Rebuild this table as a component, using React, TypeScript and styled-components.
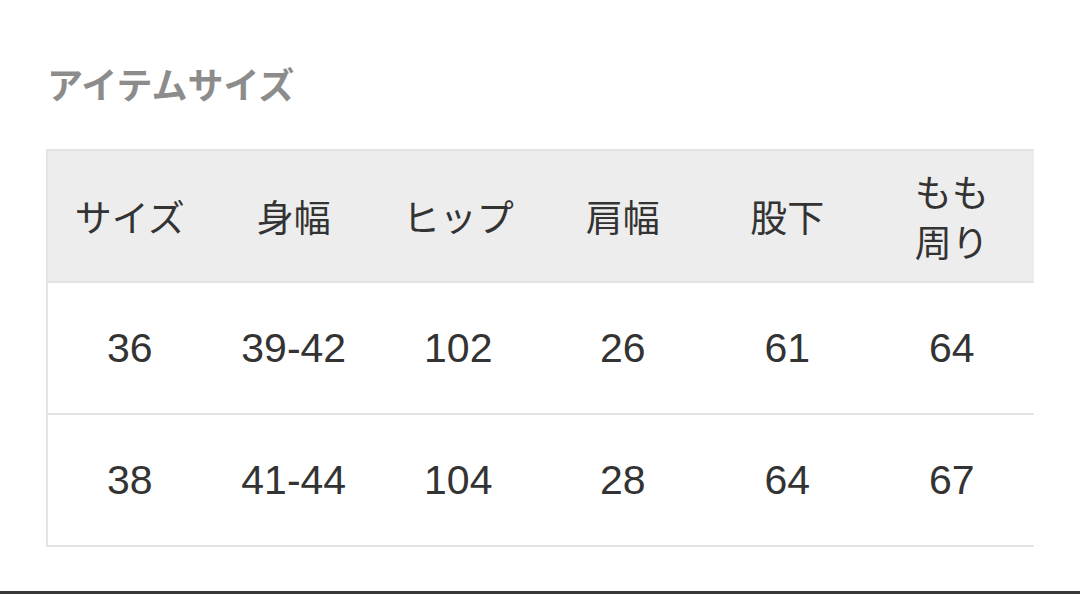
import React from "react";
import styled, { createGlobalStyle } from "styled-components";

const GlobalStyle = createGlobalStyle`
  html, body {
    margin: 0;
    padding: 0;
    background: #ffffff;
  }
  body {
    font-family: "Liberation Sans", "Noto Sans CJK JP", sans-serif;
  }
`;

const headers = ["サイズ", "身幅", "ヒップ", "肩幅", "股下", "もも\n周り"];

const rows = [
  ["36", "39-42", "102", "26", "61", "64"],
  ["38", "41-44", "104", "28", "64", "67"],
];

function App() {
  return (
    <Page>
      <GlobalStyle />
      <Content>
        <Title>アイテムサイズ</Title>
        <SizeTable>
          <thead>
            <tr>
              {headers.map((h, i) => (
                <HeadCell key={i}>
                  {h.split("\n").map((line, j) => (
                    <HeadLine key={j}>{line}</HeadLine>
                  ))}
                </HeadCell>
              ))}
            </tr>
          </thead>
          <tbody>
            {rows.map((row, r) => (
              <tr key={r}>
                {row.map((v, c) => (
                  <Cell key={c}>{v}</Cell>
                ))}
              </tr>
            ))}
          </tbody>
        </SizeTable>
      </Content>
      <BottomBar />
    </Page>
  );
}

export default App;

const Page = styled.div`
  min-height: 100vh;
  display: flex;
  flex-direction: column;
  box-sizing: border-box;
`;

const Content = styled.div`
  flex: 1;
  padding: 61px 0 0 46px;
`;

const Title = styled.h2`
  margin: 0 0 0 1px;
  font-family: "Noto Sans CJK JP", sans-serif;
  font-size: 36px;
  line-height: 44px;
  font-weight: 700;
  color: #8c8c8c;
`;

const SizeTable = styled.table`
  margin-top: 44px;
  width: 988px;
  table-layout: fixed;
  border-collapse: collapse;
  border-top: 2px solid #e4e4e4;
  border-left: 2px solid #e4e4e4;
  color: #333333;

  tr {
    border-bottom: 2px solid #e4e4e4;
  }
`;

const HeadCell = styled.th`
  height: 130px;
  padding: 0;
  background: #ededed;
  font-weight: 400;
  font-size: 37px;
  font-family: "Noto Sans CJK JP", sans-serif;
  text-align: center;
  vertical-align: middle;
  color: #333333;
`;

const HeadLine = styled.div`
  line-height: 50px;
`;

const Cell = styled.td`
  height: 130px;
  padding: 0;
  font-size: 41px;
  text-align: center;
  vertical-align: middle;
  color: #333333;
`;

const BottomBar = styled.div`
  height: 3px;
  background: #383838;
`;
